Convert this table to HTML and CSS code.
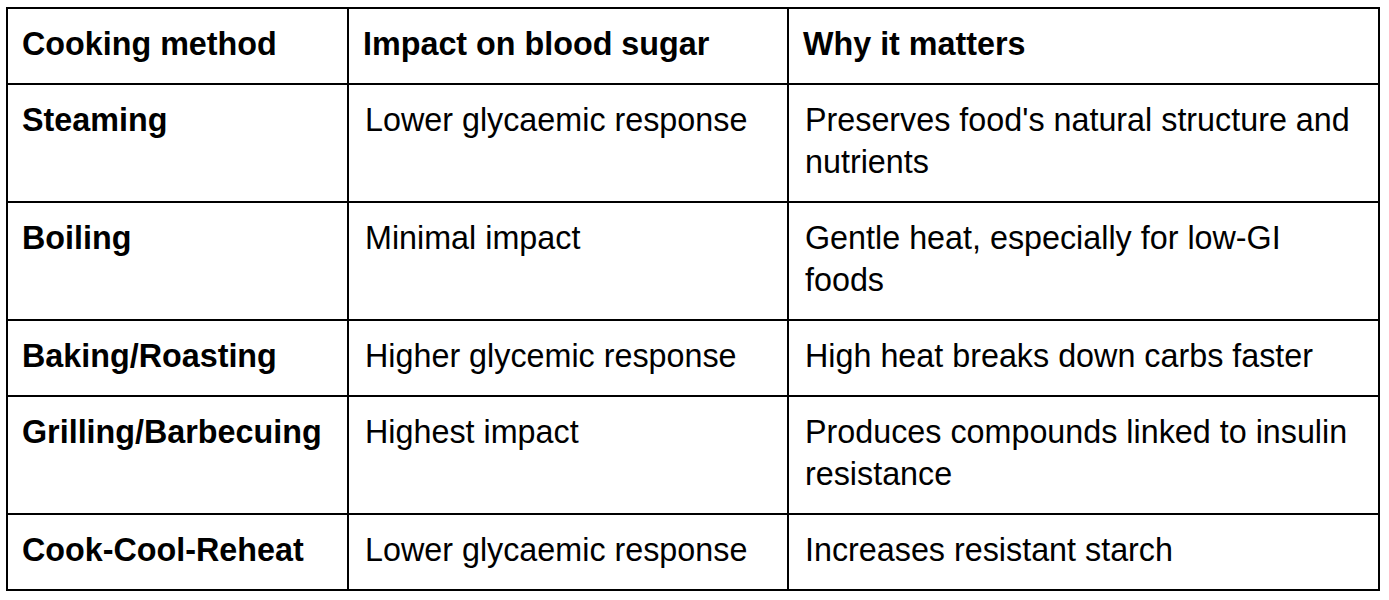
FILE: index.html
```html
<!DOCTYPE html>
<html lang="en">
<head>
<meta charset="utf-8">
<title>Cooking methods and blood sugar</title>
<link rel="stylesheet" href="styles.css">
</head>
<body>
<table class="gi-table">
  <colgroup>
    <col class="col-method">
    <col class="col-impact">
    <col class="col-why">
  </colgroup>
  <thead>
    <tr>
      <th>Cooking method</th>
      <th>Impact on blood sugar</th>
      <th>Why it matters</th>
    </tr>
  </thead>
  <tbody>
    <tr>
      <th>Steaming</th>
      <td>Lower glycaemic response</td>
      <td>Preserves food's natural structure and nutrients</td>
    </tr>
    <tr>
      <th>Boiling</th>
      <td>Minimal impact</td>
      <td>Gentle heat, especially for low-GI foods</td>
    </tr>
    <tr>
      <th>Baking/Roasting</th>
      <td>Higher glycemic response</td>
      <td>High heat breaks down carbs faster</td>
    </tr>
    <tr>
      <th>Grilling/Barbecuing</th>
      <td>Highest impact</td>
      <td>Produces compounds linked to insulin resistance</td>
    </tr>
    <tr>
      <th>Cook-Cool-Reheat</th>
      <td>Lower glycaemic response</td>
      <td>Increases resistant starch</td>
    </tr>
  </tbody>
</table>
</body>
</html>
```
FILE: styles.css
```css
html, body {
  margin: 0;
  background: #ffffff;
}

body {
  padding: 7px 0 0 6px;
  font-family: "Liberation Sans", Arial, sans-serif;
  color: #000000;
}

.gi-table {
  table-layout: fixed;
  width: 1374px;
  border-collapse: separate;
  border-spacing: 0;
  border-top: 2px solid #000;
  border-left: 2px solid #000;
}

.col-method { width: 341px; }
.col-impact { width: 440px; }
.col-why { width: 591px; }

.gi-table th,
.gi-table td {
  border-right: 2px solid #000;
  border-bottom: 2px solid #000;
  padding: 14px 20px 18px 14px;
  font-size: 32.3px;
  line-height: 42px;
  text-align: left;
  vertical-align: top;
}

.gi-table th {
  font-weight: 700;
}

.gi-table td {
  font-weight: 400;
  padding-left: 16px;
}
```
